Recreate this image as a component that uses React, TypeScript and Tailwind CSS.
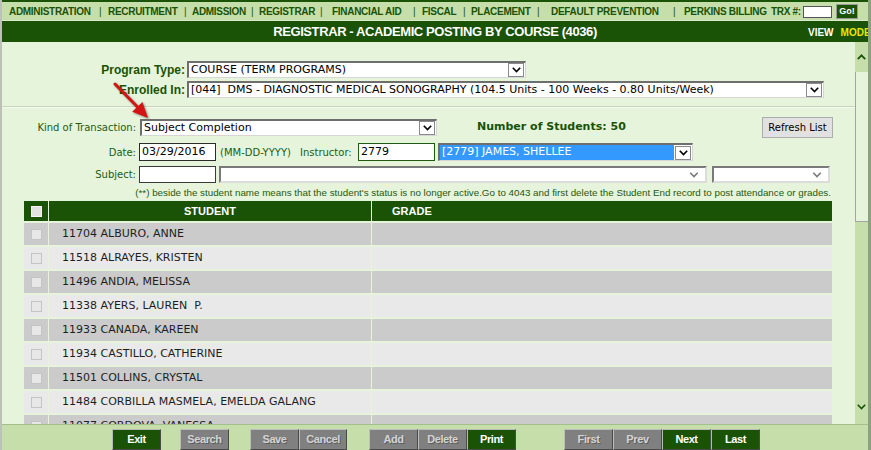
import React from "react";

const students: [string, string][] = [
  ["11704", "ALBURO, ANNE"],
  ["11518", "ALRAYES, KRISTEN"],
  ["11496", "ANDIA, MELISSA"],
  ["11338", "AYERS, LAUREN  P."],
  ["11933", "CANADA, KAREEN"],
  ["11934", "CASTILLO, CATHERINE"],
  ["11501", "COLLINS, CRYSTAL"],
  ["11484", "CORBILLA MASMELA, EMELDA GALANG"],
  ["11077", "CORDOVA, VANESSA"],
  ["11620", "CRUZ, MARIA"],
];

function ChevronDown({ className = "" }: { className?: string }) {
  return (
    <svg viewBox="0 0 9 6" className={className} fill="none" stroke="currentColor" strokeWidth={1.6}>
      <path d="M0.8 0.8 L4.5 4.6 L8.2 0.8" />
    </svg>
  );
}

function ChevronUp({ className = "" }: { className?: string }) {
  return (
    <svg viewBox="0 0 9 6" className={className} fill="none" stroke="currentColor" strokeWidth={1.8}>
      <path d="M0.8 5.2 L4.5 1.4 L8.2 5.2" />
    </svg>
  );
}

function XPSelect({
  className = "",
  children,
  hl = false,
}: {
  className?: string;
  children?: React.ReactNode;
  hl?: boolean;
}) {
  return (
    <div
      className={`flex items-center bg-white border-t-2 border-l-2 border-r border-b border-t-[#6e6e6e] border-l-[#6e6e6e] border-r-[#d6d6d6] border-b-[#d6d6d6] ${className}`}
    >
      <div
        className={`flex-1 h-full flex items-center pl-[2px] whitespace-pre overflow-hidden text-[11px] ${
          hl ? "bg-[#3399ff] text-white" : "text-black"
        }`}
      >
        {children}
      </div>
      <div className="w-[16px] h-[14px] ml-[1px] mr-[1px] flex items-center justify-center bg-white border border-[#8a8a8a] text-black shrink-0">
        <ChevronDown className="w-[9px] h-[6px]" />
      </div>
    </div>
  );
}

function ModernSelect({ className = "" }: { className?: string }) {
  return (
    <div
      className={`flex items-center justify-end bg-white border-2 border-t-[#7a7a7a] border-l-[#7a7a7a] border-r-[#dcdcdc] border-b-[#dcdcdc] pr-[6px] ${className}`}
    >
      <ChevronDown className="w-[10px] h-[6px] text-[#7a7a7a]" />
    </div>
  );
}

function FBtn({ label, on = false, className = "" }: { label: string; on?: boolean; className?: string }) {
  return (
    <div
      className={`h-[21px] flex items-center justify-center shrink-0 text-[11px] font-bold tracking-[-0.4px] border ${
        on
          ? "bg-[#1a5206] text-white border-t-[#b8b8b8] border-l-[#b8b8b8] border-r-[#4a4a4a] border-b-[#4a4a4a]"
          : "bg-[#808080] text-[#d4d4d4] [text-shadow:1px_1px_0_#5c5c5c] border-t-[#bdbdbd] border-l-[#bdbdbd] border-r-[#4a4a4a] border-b-[#4a4a4a]"
      } ${className}`}
    >
      {label}
    </div>
  );
}

export default function App() {
  const navSep = "shrink-0 font-normal";
  return (
    <div className="w-[871px] h-[450px] flex flex-col overflow-hidden border-l-2 border-l-[#bcc2b6] border-r-[3px] border-r-[#8ca27e] bg-[#e5f4db] font-['Liberation_Sans',Arial,sans-serif]">
      {/* top border */}
      <div className="h-[2px] bg-[#1a5206] shrink-0" />
      {/* nav */}
      <div className="h-[18px] shrink-0 flex items-center pl-[7px] pt-[1px] bg-[#c6dfaa] text-[#1a5206] text-[10px] font-bold tracking-[-0.3px] whitespace-nowrap">
        <span className="w-[90px] shrink-0">ADMINISTRATION</span>
        <span className={`w-[9px] ${navSep}`}>|</span>
        <span className="w-[76px] shrink-0">RECRUITMENT</span>
        <span className={`w-[8px] ${navSep}`}>|</span>
        <span className="w-[59px] shrink-0">ADMISSION</span>
        <span className={`w-[8px] ${navSep}`}>|</span>
        <span className="w-[61px] shrink-0">REGISTRAR</span>
        <span className={`w-[12px] ${navSep}`}>|</span>
        <span className="w-[81px] shrink-0">FINANCIAL AID</span>
        <span className={`w-[9px] ${navSep}`}>|</span>
        <span className="w-[41px] shrink-0">FISCAL</span>
        <span className={`w-[8px] ${navSep}`}>|</span>
        <span className="w-[66px] shrink-0">PLACEMENT</span>
        <span className={`w-[14px] ${navSep}`}>|</span>
        <span className="w-[122px] shrink-0">DEFAULT PREVENTION</span>
        <span className={`w-[11px] ${navSep}`}>|</span>
        <span className="w-[87px] shrink-0">PERKINS BILLING</span>
        <span className="w-[32px] shrink-0">TRX #:</span>
        <span className="w-[29px] h-[12px] shrink-0 bg-white border border-[#555]" />
        <span className="ml-[4px] w-[22px] h-[15px] shrink-0 flex items-center justify-center bg-[#1a5206] text-white text-[9px] tracking-normal border border-[#9a9a9a]">
          Go!
        </span>
      </div>
      <div className="h-[1px] shrink-0 bg-[#dcebd0]" />
      {/* title */}
      <div className="relative h-[21px] shrink-0 flex items-center justify-center bg-[#1a5206] overflow-hidden">
        <span className="text-white text-[13px] font-bold tracking-[-0.4px]">
          REGISTRAR - ACADEMIC POSTING BY COURSE (4036)
        </span>
        <span className="absolute left-[806px] top-[4px] text-[10px] font-bold whitespace-nowrap">
          <span className="text-white">VIEW</span>
          <span className="ml-[7px] text-[#e8e800]">MODE</span>
        </span>
      </div>

      {/* main */}
      <div className="h-[382px] shrink-0 flex">
        <div className="relative w-[853px] h-full overflow-hidden flex flex-col font-['DejaVu_Sans',sans-serif]">
          {/* Program type */}
          <div className="mt-[19px] h-[17px] flex items-center shrink-0">
            <div className="w-[185px] pr-[2px] text-right text-[12px] font-bold text-[#1a5206] font-['Liberation_Sans',Arial,sans-serif]">
              Program Type:
            </div>
            <XPSelect className="w-[339px] h-[17px]">COURSE (TERM PROGRAMS)</XPSelect>
          </div>
          {/* Enrolled */}
          <div className="mt-[3px] h-[17px] flex items-center shrink-0">
            <div className="w-[185px] pr-[2px] text-right text-[12px] font-bold text-[#1a5206] font-['Liberation_Sans',Arial,sans-serif]">
              Enrolled In:
            </div>
            <XPSelect className="w-[637px] h-[17px]">
              {"[044]  DMS - DIAGNOSTIC MEDICAL SONOGRAPHY (104.5 Units - 100 Weeks - 0.80 Units/Week)"}
            </XPSelect>
          </div>
          {/* hr */}
          <div className="mt-[8px] h-[2px] shrink-0 border-t border-[#c8d4c0] border-b border-b-[#f3fbef]" />
          {/* Kind of transaction */}
          <div className="mt-[9px] h-[21px] flex items-center shrink-0">
            <div className="w-[134px] text-right text-[10px] text-[#235c14]">Kind of Transaction:</div>
            <XPSelect className="ml-[4px] w-[297px] h-[17px]">Subject Completion</XPSelect>
            <div className="ml-[40px] text-[11px] font-bold text-[#1a5206]">Number of Students: 50</div>
            <div className="ml-auto mr-[22px] w-[71px] h-[21px] flex items-center justify-center bg-[#e1e1e1] border border-[#adadad] text-[10px] text-black">
              Refresh List
            </div>
          </div>
          {/* Date row */}
          <div className="mt-[5px] h-[18px] flex items-center shrink-0 text-[10px] text-[#235c14]">
            <div className="w-[134px] text-right">Date:</div>
            <div className="ml-[3px] w-[77px] h-[18px] flex items-center pl-[2px] bg-white border border-[#2c2c2c] text-[11px] text-black">
              03/29/2016
            </div>
            <div className="ml-[4px] w-[80px] whitespace-nowrap">(MM-DD-YYYY)</div>
            <div className="w-[58px] whitespace-nowrap">Instructor:</div>
            <div className="w-[77px] h-[18px] flex items-center pl-[2px] bg-white border border-[#1f5a10] text-[11px] text-black">
              2779
            </div>
            <XPSelect hl className="ml-[3px] w-[255px] h-[18px]">
              {"[2779] JAMES, SHELLEE"}
            </XPSelect>
          </div>
          {/* Subject row */}
          <div className="mt-[5px] h-[17px] flex items-center shrink-0 text-[10px] text-[#235c14]">
            <div className="w-[134px] text-right">Subject:</div>
            <div className="ml-[3px] w-[77px] h-[17px] bg-white border border-[#3a3a3a]" />
            <ModernSelect className="ml-[3px] w-[488px] h-[17px]" />
            <ModernSelect className="ml-[5px] w-[118px] h-[17px]" />
          </div>
          {/* notice */}
          <div className="mt-[4px] h-[12px] shrink-0 flex items-center justify-end pr-[24px] text-[9.8px] text-[#1f5a10] whitespace-nowrap font-['Liberation_Sans',Arial,sans-serif]">
            (**) beside the student name means that the student's status is no longer active.Go to 4043 and first delete the Student End record to post attendance or grades.
          </div>
          {/* table header */}
          <div className="mt-[2px] ml-[22px] w-[808px] h-[20px] shrink-0 flex gap-[1px] text-white text-[11px] font-bold font-['Liberation_Sans',Arial,sans-serif]">
            <div className="w-[24px] bg-[#1a5206] flex items-center pl-[7px]">
              <div className="w-[11px] h-[11px] bg-[#e2e2e2] border border-[#f4f4f4]" />
            </div>
            <div className="w-[322px] bg-[#1a5206] flex items-center justify-center">STUDENT</div>
            <div className="flex-1 bg-[#1a5206] flex items-center pl-[20px]">GRADE</div>
          </div>
          {/* rows */}
          <div className="mt-[2px] ml-[22px] w-[808px] flex flex-col gap-[2px] shrink-0">
            {students.map(([id, name], i) => {
              const bg = i % 2 === 0 ? "bg-[#cbcbcb]" : "bg-[#e9e9e9]";
              return (
                <div key={id} className="h-[22px] flex gap-[1px] shrink-0">
                  <div className={`w-[24px] ${bg} flex items-center pl-[7px]`}>
                    <div className="w-[11px] h-[11px] bg-[#e7e7e7] border border-[#c4c4c4]" />
                  </div>
                  <div className={`w-[322px] ${bg} flex items-center pl-[13px] text-[11px] text-[#1e1e1e] whitespace-pre`}>
                    {id + " " + name}
                  </div>
                  <div className={`flex-1 ${bg}`} />
                </div>
              );
            })}
          </div>

          {/* red annotation arrow */}
          <svg
            className="absolute left-[104px] top-[36px] w-[50px] h-[45px] drop-shadow-[1px_1px_1px_rgba(0,0,0,0.45)]"
            viewBox="0 0 50 45"
          >
            <line x1="9" y1="6" x2="32" y2="29.5" stroke="#d21414" strokeWidth="3" strokeLinecap="round" />
            <polygon points="42,40 26.2,33.8 36.4,24" fill="#d21414" />
          </svg>
        </div>

        {/* scrollbar */}
        <div className="w-[13px] h-full flex flex-col bg-[#c6dfaa]">
          <div className="h-[30px] shrink-0 flex items-center justify-center text-[#1a5206]">
            <ChevronUp className="w-[9px] h-[6px]" />
          </div>
          <div className="h-[150px] shrink-0 bg-[#e5f4db] border-l border-b border-[#a4a4a4]" />
          <div className="flex-1 flex items-end justify-center pb-[14px] text-[#1a5206]">
            <ChevronDown className="w-[9px] h-[6px]" />
          </div>
        </div>
      </div>

      {/* footer */}
      <div className="h-[26px] shrink-0 flex items-start pt-[4px] bg-[#c6dfaa] border-t border-[#a3bf8e]">
        <FBtn on label="Exit" className="ml-[110px] w-[49px]" />
        <FBtn label="Search" className="ml-[19px] w-[49px]" />
        <FBtn label="Save" className="ml-[21px] w-[49px]" />
        <FBtn label="Cancel" className="w-[48px]" />
        <FBtn label="Add" className="ml-[22px] w-[49px]" />
        <FBtn label="Delete" className="w-[49px]" />
        <FBtn on label="Print" className="w-[49px]" />
        <FBtn label="First" className="ml-[48px] w-[49px]" />
        <FBtn label="Prev" className="w-[49px]" />
        <FBtn on label="Next" className="w-[49px]" />
        <FBtn on label="Last" className="w-[49px]" />
      </div>
    </div>
  );
}
